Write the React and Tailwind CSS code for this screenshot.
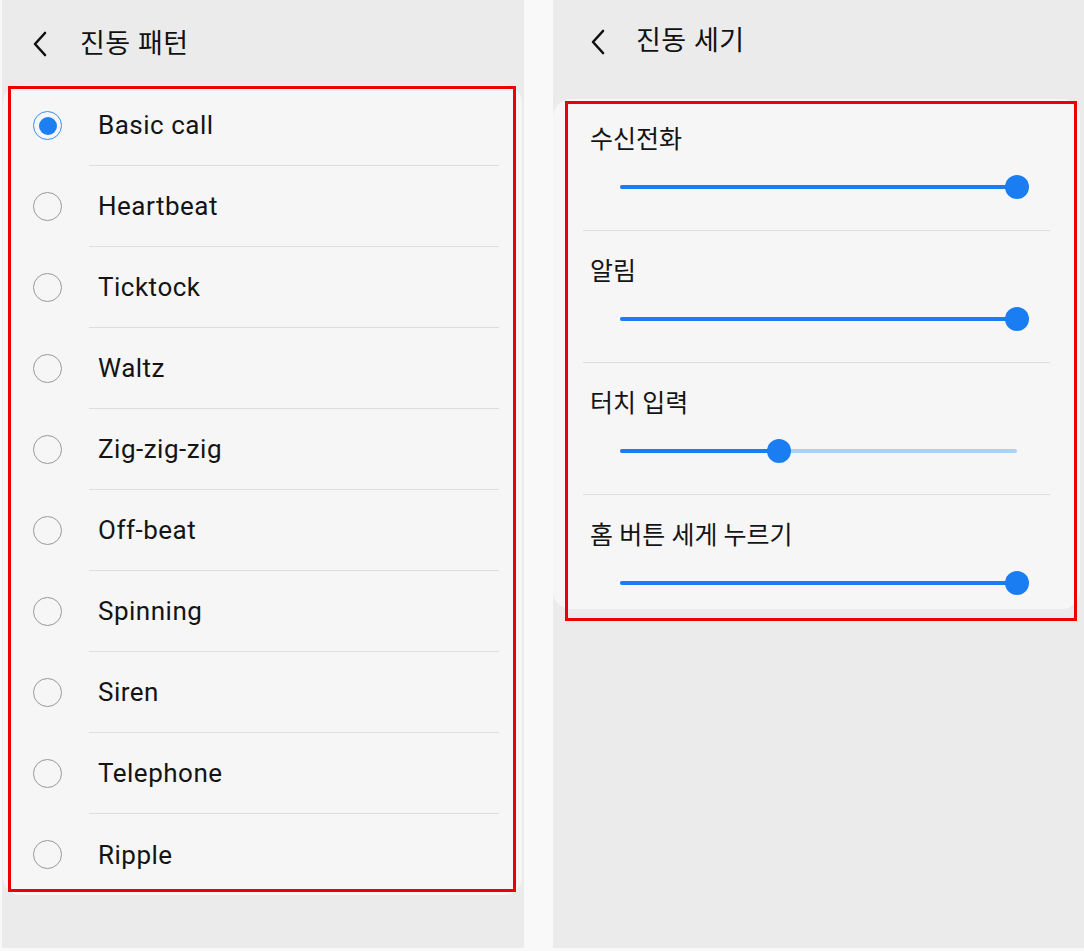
import React from 'react';

const patterns = [
    'Basic call',
    'Heartbeat',
    'Ticktock',
    'Waltz',
    'Zig-zig-zig',
    'Off-beat',
    'Spinning',
    'Siren',
    'Telephone',
    'Ripple',
];

const levels = [
    { label: '수신전화', value: 1 },
    { label: '알림', value: 1 },
    { label: '터치 입력', value: 0.4 },
    { label: '홈 버튼 세게 누르기', value: 1 },
];

const font = { fontFamily: 'Roboto, "Noto Sans", "Noto Sans CJK KR", sans-serif' };

// Thin back chevron
const Back = () => (
    <svg width="18" height="26" viewBox="0 0 18 26" fill="none">
        <polyline points="14,2 4,13 14,24" stroke="#111" strokeWidth="2.6" strokeLinecap="round" strokeLinejoin="round" />
    </svg>
);

const Header = ({ title, className }) => (
    <div className={`flex items-center ${className}`}>
        <Back />
        <span className="text-[27px] text-[#111] tracking-[0.5px]">{title}</span>
    </div>
);

const Radio = ({ checked }) => (
    <div
        className={`w-[29px] h-[29px] rounded-full flex items-center justify-center border-[1.5px] ${
            checked ? 'border-[#3a8cf3]' : 'border-[#999]'
        }`}
    >
        {checked && <div className="w-[18px] h-[18px] rounded-full bg-[#1e7ff2]" />}
    </div>
);

const Slider = ({ value }) => {
    const pos = value * 397;
    return (
        <div className="relative h-[24px] ml-[67px] w-[397px]">
            <div className="absolute left-0 right-0 top-[10px] h-[4px] rounded-full bg-[#a9d2f8]" />
            <div className="absolute left-0 top-[10px] h-[4px] rounded-full bg-[#1a7ef2]" style={{ width: pos }} />
            <div className="absolute top-0 w-[24px] h-[24px] rounded-full bg-[#1a7ef2]" style={{ left: pos - 12 }} />
        </div>
    );
};

export default function App() {
    return (
        <div className="w-[1084px] h-[951px] flex bg-[#f9f9f9]" style={font}>
            {/* 진동 패턴 */}
            <div className="relative ml-[2px] w-[522px] h-[948px] bg-[#ebebeb] flex flex-col">
                <Header title="진동 패턴" className="h-[85px] pl-[29px] pt-[3px] gap-[31px]" />
                <div className="ml-[1px] w-[519px] rounded-[18px] bg-[#f6f6f6] flex flex-col">
                    {patterns.map((p, i) => (
                        <div key={p} className="h-[81px] flex items-stretch">
                            <div className="w-[86px] flex items-center pl-[30px]">
                                <Radio checked={i === 0} />
                            </div>
                            <div
                                className={`flex-1 mr-[23px] flex items-center pl-[9px] pt-[1px] ${
                                    i < patterns.length - 1 ? 'border-b border-[#dedede]' : ''
                                }`}
                            >
                                <span className="text-[26px] text-[#141414] tracking-[0.5px]">{p}</span>
                            </div>
                        </div>
                    ))}
                </div>
                <div className="absolute left-[6px] top-[86px] w-[508px] h-[806px] border-[3px] border-[#ee0000]" />
            </div>

            <div className="w-[29px]" />

            {/* 진동 세기 */}
            <div className="relative w-[531px] h-[948px] bg-[#ebebeb] flex flex-col">
                <Header title="진동 세기" className="h-[82px] pl-[36px] pt-[1px] gap-[29px]" />
                <div className="mt-[17px] w-[527px] rounded-[18px] bg-[#f6f6f6] flex flex-col">
                    {levels.map((l, i) => (
                        <div
                            key={l.label}
                            className={`flex flex-col mx-[30px] ${
                                i < levels.length - 1 ? 'h-[132px] border-b border-[#dedede]' : 'h-[114px]'
                            }`}
                        >
                            <span className="mt-[26px] ml-[7px] text-[25px] leading-[30px] text-[#141414]">{l.label}</span>
                            <div className="mt-[20px] -ml-[30px]">
                                <Slider value={l.value} />
                            </div>
                        </div>
                    ))}
                </div>
                <div className="absolute left-[12px] top-[101px] w-[512px] h-[520px] border-[3px] border-[#ee0000]" />
            </div>
        </div>
    );
}
